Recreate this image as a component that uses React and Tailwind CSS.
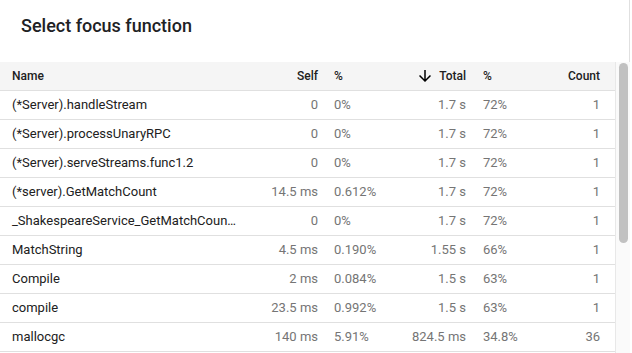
import React from "react";

const rows = [
  ["(*Server).handleStream", "0", "0%", "1.7 s", "72%", "1"],
  ["(*Server).processUnaryRPC", "0", "0%", "1.7 s", "72%", "1"],
  ["(*Server).serveStreams.func1.2", "0", "0%", "1.7 s", "72%", "1"],
  ["(*server).GetMatchCount", "14.5 ms", "0.612%", "1.7 s", "72%", "1"],
  ["_ShakespeareService_GetMatchCount_Handler", "0", "0%", "1.7 s", "72%", "1"],
  ["MatchString", "4.5 ms", "0.190%", "1.55 s", "66%", "1"],
  ["Compile", "2 ms", "0.084%", "1.5 s", "63%", "1"],
  ["compile", "23.5 ms", "0.992%", "1.5 s", "63%", "1"],
  ["mallocgc", "140 ms", "5.91%", "824.5 ms", "34.8%", "36"],
];

const grid = "grid grid-cols-[250px_68px_82px_66px_74px_60px] pr-[15px] items-center";

export default function App() {
  return (
    <div className="w-[632px] h-[353px] overflow-hidden bg-white font-['Roboto',sans-serif]">
      <div className="w-[630px] h-[62px] border-r border-[#e0e0e0] pl-[21px] pt-[14px]">
        <h2 className="text-[18px] leading-[24px] font-medium text-[#202124]">Select focus function</h2>
      </div>
      <div className="flex h-[291px]">
        <div className="w-[615px] shrink-0">
          <div className={`${grid} h-[29px] bg-[#f5f5f5] border-b border-[#e0e0e0] text-[12px] font-medium text-[#212121]`}>
            <div className="pl-3">Name</div>
            <div className="text-right">Self</div>
            <div className="pl-4">%</div>
            <div className="flex items-center justify-end gap-[5px]">
              <svg width="18" height="18" viewBox="0 0 24 24" className="shrink-0">
                <path d="M20 12l-1.41-1.41L13 16.17V4h-2v12.17l-5.58-5.59L4 12l8 8 8-8z" fill="#000" />
              </svg>
              <span>Total</span>
            </div>
            <div className="pl-[17px]">%</div>
            <div className="text-right">Count</div>
          </div>
          {rows.map((r, i) => (
            <div key={i} className={`${grid} h-[29px] border-b border-[#e0e0e0] text-[13px]`}>
              <div className="pl-3 pr-3 truncate text-[#212121]">{r[0]}</div>
              <div className="text-right text-[#757575]">{r[1]}</div>
              <div className="pl-4 text-[#757575]">{r[2]}</div>
              <div className="text-right text-[#757575] whitespace-nowrap">{r[3]}</div>
              <div className="pl-[17px] text-[#757575]">{r[4]}</div>
              <div className="text-right text-[#757575]">{r[5]}</div>
            </div>
          ))}
        </div>
        <div className="w-[15px] shrink-0 bg-[#fafafa] border-l border-[#e8e8e8] pl-[3px] pt-[1px]">
          <div className="w-[9px] h-[180px] rounded-full bg-[#c1c1c1]" />
        </div>
      </div>
    </div>
  );
}
